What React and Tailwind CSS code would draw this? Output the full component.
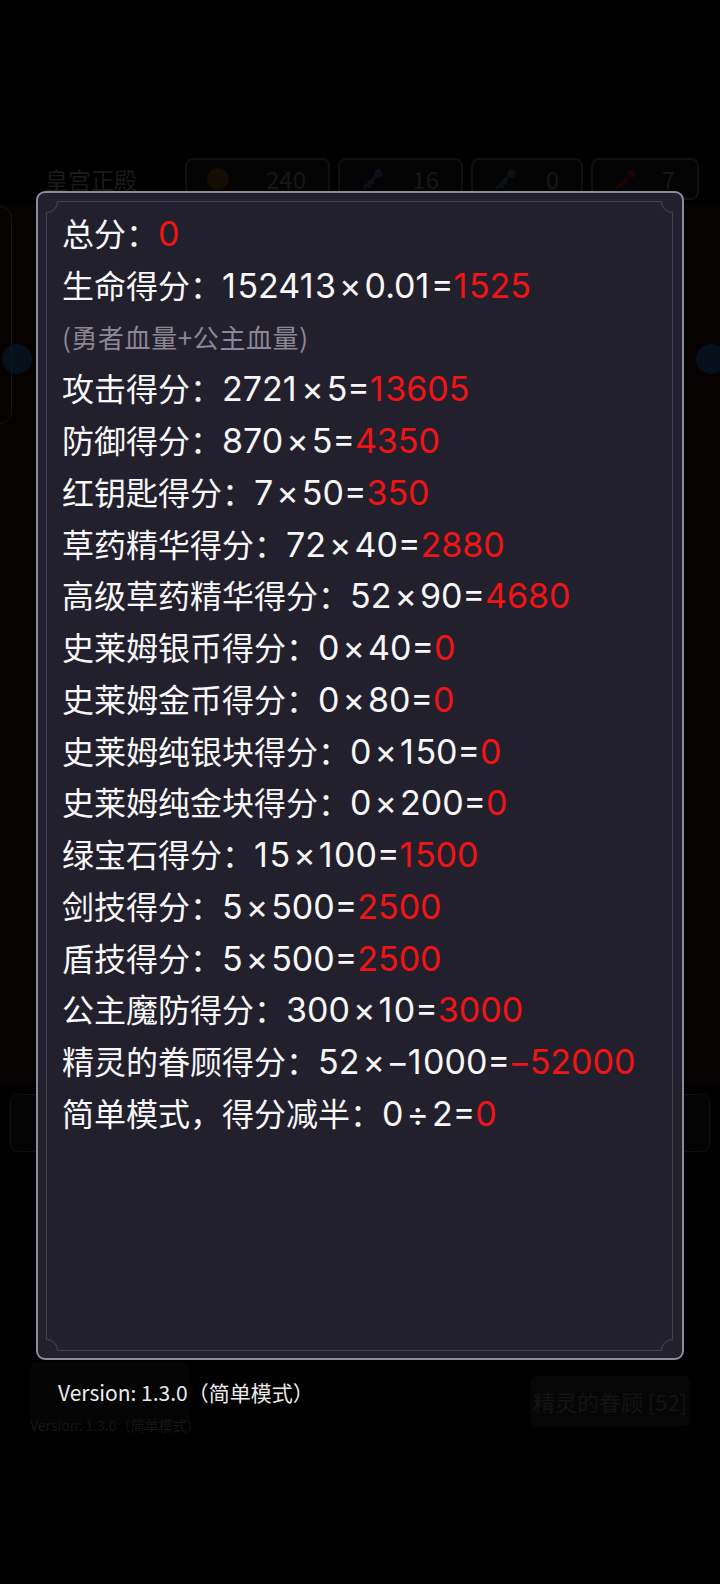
import React from 'react';

const rows = [
  { label: '总分：', expr: '', result: '0' },
  { label: '生命得分：', expr: '152413×0.01=', result: '1525' },
  { note: '(勇者血量+公主血量)' },
  { label: '攻击得分：', expr: '2721×5=', result: '13605' },
  { label: '防御得分：', expr: '870×5=', result: '4350' },
  { label: '红钥匙得分：', expr: '7×50=', result: '350' },
  { label: '草药精华得分：', expr: '72×40=', result: '2880' },
  { label: '高级草药精华得分：', expr: '52×90=', result: '4680' },
  { label: '史莱姆银币得分：', expr: '0×40=', result: '0' },
  { label: '史莱姆金币得分：', expr: '0×80=', result: '0' },
  { label: '史莱姆纯银块得分：', expr: '0×150=', result: '0' },
  { label: '史莱姆纯金块得分：', expr: '0×200=', result: '0' },
  { label: '绿宝石得分：', expr: '15×100=', result: '1500' },
  { label: '剑技得分：', expr: '5×500=', result: '2500' },
  { label: '盾技得分：', expr: '5×500=', result: '2500' },
  { label: '公主魔防得分：', expr: '300×10=', result: '3000' },
  { label: '精灵的眷顾得分：', expr: '52×−1000=', result: '−52000' },
  { label: '简单模式，得分减半：', expr: '0÷2=', result: '0' },
];

// the game font sets 1 a bit wider, operators with more air and a tighter minus
const spacing = {
  '×': 'px-[3px]',
  '÷': 'px-[3px]',
  '1': 'pr-[1.6px]',
  '−': 'mx-[-1.4px]',
};

const Num = ({ text }) =>
  text.split(/([×÷−1])/).map((p, i) =>
    spacing[p] ? (
      <span key={i} className={spacing[p]}>
        {p}
      </span>
    ) : (
      <React.Fragment key={i}>{p}</React.Fragment>
    )
  );

// concave notch drawn over each corner of the inner frame line
const Notch = ({ className }) => (
  <svg width="12" height="12" viewBox="0 0 12 12" className={`absolute ${className}`}>
    <rect x="0" y="0" width="12" height="12" fill="#23202e" />
    <path d="M11.5 0.5 A11 11 0 0 1 0.5 11.5" fill="none" stroke="#4a4560" strokeWidth="1" />
  </svg>
);

const Key = ({ color }) => (
  <svg width="26" height="26" viewBox="0 0 24 24">
    <path d="M4 20 L13 11 M10 14 l2 2 M7 17 l2 2" stroke={color} strokeWidth="3" strokeLinecap="round" />
    <circle cx="17" cy="7" r="4" fill={color} />
  </svg>
);

const Pill = ({ width, icon, value }) => (
  <div
    className="flex h-[42px] items-center justify-between rounded-lg border-2 border-[#101010] bg-[#040404] pl-[20px] pr-[22px]"
    style={{ width }}
  >
    {icon}
    <span className="text-[24px] text-[#171717]">{value}</span>
  </div>
);

export default function App() {
  return (
    <div className="relative h-[1584px] w-[720px] overflow-hidden bg-black font-['Noto_Sans_CJK_SC','Noto_Sans',sans-serif]">
      {/* dimmed game screen underneath */}
      <div className="flex h-full flex-col">
        <div className="h-[158px]" />
        <div className="flex h-[42px] items-center gap-[8px] pl-[45px]">
          <span className="mr-[40px] text-[23px] text-[#1a1a1a]">皇宫正殿</span>
          <Pill width={145} icon={<span className="h-[22px] w-[22px] rounded-full bg-[#150c02]" />} value="240" />
          <Pill width={125} icon={<Key color="#0b1019" />} value="16" />
          <Pill width={112} icon={<Key color="#0b1019" />} value="0" />
          <Pill width={108} icon={<Key color="#1a0505" />} value="7" />
        </div>
        <div className="mt-[4px] flex h-[880px] items-start justify-between bg-[#060202]">
          <div className="relative ml-[-14px] mt-[2px] h-[218px] w-[26px] rounded-xl border border-[#151515]" />
          <div className="ml-[-10px] mt-[140px] h-[30px] w-[30px] rounded-full bg-[#06101a]" />
          <div className="flex-1" />
          <div className="mr-[-6px] mt-[140px] h-[30px] w-[30px] rounded-full bg-[#06101a]" />
        </div>
        <div className="mt-[10px] flex justify-between px-[10px]">
          <div className="h-[58px] w-[300px] rounded-lg border border-[#101010] bg-[#040404]" />
          <div className="h-[58px] w-[300px] rounded-lg border border-[#101010] bg-[#040404]" />
        </div>
        <div className="mt-[210px] flex items-start justify-between px-[30px]">
          <div className="flex h-[62px] w-[160px] items-end rounded-md bg-[#050505]">
            <span className="mb-[-12px] whitespace-nowrap text-[14px] text-[#161616]">Version: 1.3.0（简单模式）</span>
          </div>
          <div className="mt-[14px] flex h-[50px] w-[160px] items-center justify-center whitespace-nowrap rounded-md bg-[#060606] text-[22px] text-[#141414]">
            精灵的眷顾 [52]
          </div>
        </div>
      </div>

      {/* score breakdown dialog */}
      <div className="absolute inset-0 flex flex-col px-[36px] pt-[191px]">
        <div className="relative h-[1169px] rounded-[9px] border-2 border-[#8f8a99] bg-[#23202e] px-[24px] pt-[14px]">
          <div className="absolute bottom-[7px] left-[8px] right-[9px] top-[8px] border border-[#45405a]">
            <Notch className="left-[-1px] top-[-1px]" />
            <Notch className="right-[-1px] top-[-1px] -scale-x-100" />
            <Notch className="bottom-[-1px] left-[-1px] -scale-y-100" />
            <Notch className="bottom-[-1px] right-[-1px] -scale-100" />
          </div>
          <div className="relative flex flex-col">
            {rows.map((row, i) =>
              row.note ? (
                <div key={i} className="h-[51.75px] text-[26px] leading-[51.75px] tracking-[0.6px] text-[#8c8795]">
                  {row.note}
                </div>
              ) : (
                <div key={i} className="h-[51.75px] whitespace-nowrap text-[32px] leading-[51.75px] text-[#f7f7f7]">
                  {row.label}
                  <span className="font-['Inter','Noto_Sans_CJK_SC',sans-serif] text-[34px]">
                    <Num text={row.expr} />
                    <span className="text-[#f01414]">
                      <Num text={row.result} />
                    </span>
                  </span>
                </div>
              )
            )}
          </div>
        </div>
        <div className="mt-[17px] pl-[22px] text-[21px] leading-[30px] text-[#ececec]">Version: 1.3.0（简单模式）</div>
      </div>
    </div>
  );
}
